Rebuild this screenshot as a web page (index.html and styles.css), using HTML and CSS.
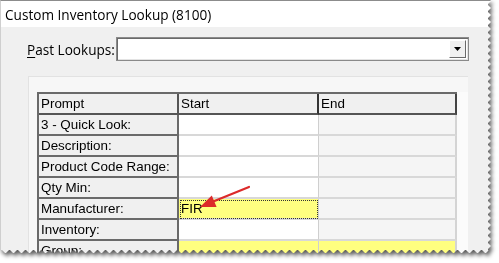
FILE: index.html
```html
<!DOCTYPE html>
<html>
<head>
<meta charset="utf-8">
<link rel="stylesheet" href="styles.css">
</head>
<body>
<div class="stage">
  <div class="shadow">
    <div class="tear-right">
      <div class="window">
        <div class="titlebar">Custom Inventory Lookup (8100)</div>
        <div class="client">
          <div class="lookup-row">
            <span class="lbl"><u>P</u>ast Lookups:</span>
            <div class="combo">
              <div class="combo-field"></div>
              <div class="combo-btn">
                <svg width="7" height="4" viewBox="0 0 7 4"><path d="M0 0H7L3.5 4Z" fill="#000"/></svg>
              </div>
            </div>
          </div>
          <div class="panel">
            <div class="grid">
              <div class="hd c-prompt">Prompt</div>
              <div class="hd c-start">Start</div>
              <div class="hd c-end">End</div>

              <div class="pr">3 - Quick Look:</div>
              <div class="st"></div>
              <div class="en"></div>

              <div class="pr">Description:</div>
              <div class="st"></div>
              <div class="en"></div>

              <div class="pr">Product Code Range:</div>
              <div class="st"></div>
              <div class="en"></div>

              <div class="pr">Qty Min:</div>
              <div class="st"></div>
              <div class="en"></div>

              <div class="pr">Manufacturer:</div>
              <div class="st focus">FIR</div>
              <div class="en"></div>

              <div class="pr">Inventory:</div>
              <div class="st"></div>
              <div class="en"></div>

              <div class="pr">Group:</div>
              <div class="st yellow"></div>
              <div class="en yellow"></div>
            </div>
            <div class="grid-side"></div>
          </div>
        </div>
      </div>
    </div>
  </div>
  <svg class="arrow" width="499" height="263" viewBox="0 0 499 263">
    <line x1="249" y1="187" x2="212" y2="202" stroke="#dc2a2a" stroke-width="2.2" stroke-linecap="round"/>
    <path d="M200 207 L211.8 195.4 L216.6 207 Z" fill="#dc2a2a"/>
  </svg>
</div>
</body>
</html>
```

FILE: styles.css
```css
html, body {
  margin: 0;
  padding: 0;
  background: #ffffff;
}

.stage {
  position: relative;
  width: 499px;
  height: 263px;
  overflow: hidden;
}

.shadow {
  width: 491px;
  height: 254px;
  filter: drop-shadow(2px 3px 2px rgba(0, 0, 0, 0.65));
}

.tear-right {
  width: 491px;
  height: 254px;
  -webkit-mask: conic-gradient(from 225deg at right, #0000, #000 1deg 89deg, #0000 90deg) 50% / 100% 7px;
  mask: conic-gradient(from 225deg at right, #0000, #000 1deg 89deg, #0000 90deg) 50% / 100% 7px;
}

.window {
  width: 491px;
  height: 254px;
  box-sizing: border-box;
  background: #f0f0f0;
  border-top: 1px solid #8c8c8c;
  border-left: 1px solid #cfcfcf;
  display: flex;
  flex-direction: column;
  -webkit-mask: conic-gradient(from -45deg at bottom, #0000, #000 1deg 89deg, #0000 90deg) 50% / 8px 100%;
  mask: conic-gradient(from -45deg at bottom, #0000, #000 1deg 89deg, #0000 90deg) 50% / 8px 100%;
}

.titlebar {
  height: 26px;
  flex: none;
  background: #ffffff;
  font-family: "Open Sans", "Noto Sans", sans-serif;
  font-size: 13.6px;
  line-height: 28px;
  color: #000;
  padding-left: 4px;
}

.client {
  flex: 1;
  display: flex;
  flex-direction: column;
}

.lookup-row {
  display: flex;
  align-items: center;
  height: 24px;
  margin-top: 10px;
  padding-left: 26px;
}

.lbl {
  font-family: "Open Sans", "Noto Sans", sans-serif;
  font-size: 13.6px;
  color: #000;
  width: 89px;
  padding-top: 1px;
}

.lbl u {
  text-decoration-thickness: 1px;
  text-underline-offset: 2px;
}

.combo {
  width: 353px;
  height: 24px;
  box-sizing: border-box;
  border: 1px solid #8a8a8a;
  box-shadow: inset 1px 1px 0 #6a6a6a, inset -1px -1px 0 #e3e3e3;
  background: #ffffff;
  display: flex;
  padding: 2px;
}

.combo-field {
  flex: 1;
}

.combo-btn {
  width: 17px;
  box-sizing: border-box;
  background: #f0f0f0;
  border-top: 1px solid #ffffff;
  border-left: 1px solid #ffffff;
  border-right: 1px solid #6a6a6a;
  border-bottom: 1px solid #6a6a6a;
  display: flex;
  align-items: center;
  justify-content: center;
}

.panel {
  margin: 15px 0 0 27px;
  width: 440px;
  flex: 1;
  box-sizing: border-box;
  border-top: 1px solid #e2e2e2;
  border-left: 1px solid #e2e2e2;
  background: #f7f7f7;
  padding: 15px 0 0 8px;
  display: flex;
  align-items: flex-start;
}

.grid {
  display: grid;
  grid-template-columns: 140px 140px 138px;
  grid-auto-rows: 21px;
  border-top: 2px solid #6a6a6a;
  border-left: 2px solid #6a6a6a;
  font-family: "Liberation Sans", Arial, sans-serif;
  font-size: 13.4px;
  color: #000;
}

.grid > div {
  box-sizing: border-box;
  line-height: 20px;
  padding-left: 2px;
  white-space: nowrap;
  overflow: hidden;
}

.hd {
  background: #f0f0f0;
  border-bottom: 2px solid #555;
}

.hd.c-prompt {
  border-right: 2px solid #555;
}

.hd.c-start {
  border-right: 2px solid #333;
}

.hd.c-end {
  border-right: 2px solid #444;
}

.pr {
  background: #f0f0f0;
  border-right: 2px solid #6a6a6a;
  border-bottom: 2px solid #6a6a6a;
}

.st {
  background: #ffffff;
  border-right: 1px solid #cfcfcf;
  border-bottom: 2px solid #d8d8d8;
}

.en {
  background: #f5f5f5;
  border-right: 2px solid #d4d4d4;
  border-bottom: 2px solid #d8d8d8;
}

.st.focus {
  background: #ffff80;
  outline: 1px dotted #333;
  outline-offset: -2px;
}

.st.yellow,
.en.yellow {
  background: #ffff80;
}

.grid-side {
  width: 12px;
  align-self: stretch;
  background: #fbfbfb;
}

.arrow {
  position: absolute;
  left: 0;
  top: 0;
  pointer-events: none;
}
```
